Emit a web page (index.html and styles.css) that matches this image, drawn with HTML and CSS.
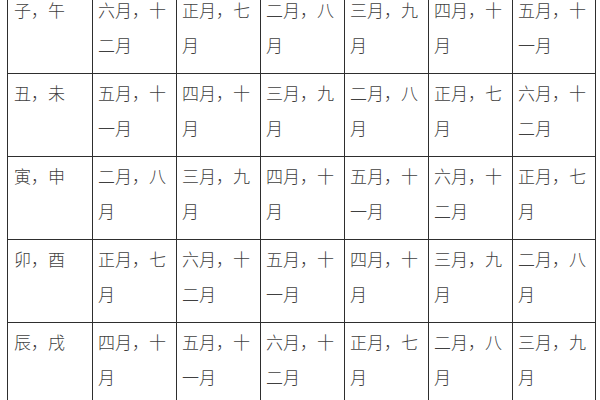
FILE: index.html
```html
<!DOCTYPE html>
<html lang="zh-CN">
<head>
<meta charset="utf-8">
<title>月份表</title>
<link rel="stylesheet" href="styles.css">
</head>
<body>
<table class="months">
  <colgroup>
    <col class="c-first">
    <col class="c"><col class="c"><col class="c"><col class="c"><col class="c"><col class="c-last">
  </colgroup>
  <tbody>
    <tr><td class="branch">子，午</td><td>六月，十二月</td><td>正月，七月</td><td>二月，八月</td><td>三月，九月</td><td>四月，十月</td><td>五月，十一月</td></tr>
    <tr><td class="branch">丑，未</td><td>五月，十一月</td><td>四月，十月</td><td>三月，九月</td><td>二月，八月</td><td>正月，七月</td><td>六月，十二月</td></tr>
    <tr><td class="branch">寅，申</td><td>二月，八月</td><td>三月，九月</td><td>四月，十月</td><td>五月，十一月</td><td>六月，十二月</td><td>正月，七月</td></tr>
    <tr><td class="branch">卯，酉</td><td>正月，七月</td><td>六月，十二月</td><td>五月，十一月</td><td>四月，十月</td><td>三月，九月</td><td>二月，八月</td></tr>
    <tr><td class="branch">辰，戌</td><td>四月，十月</td><td>五月，十一月</td><td>六月，十二月</td><td>正月，七月</td><td>二月，八月</td><td>三月，九月</td></tr>
  </tbody>
</table>
</body>
</html>
```
FILE: styles.css
```css
html, body {
  margin: 0;
  padding: 0;
  background: #ffffff;
  overflow: hidden;
}
body {
  width: 600px;
  height: 400px;
  font-family: "Noto Sans CJK SC", "Noto Sans", sans-serif;
  color: #404040;
}
.months {
  border-collapse: collapse;
  table-layout: fixed;
  width: 587px;
  margin: -10px 0 0 7px;
  font-size: 17px;
  font-weight: 300;
  line-height: 35px;
}
.c-first { width: 85px; }
.c { width: 84px; }
.c-last { width: 83px; }
.months td {
  border: 1px solid #2e2e2e;
  height: 83px;
  box-sizing: border-box;
  padding: 1px 4px 0 5px;
  vertical-align: top;
  word-break: break-all;
}
.months td.branch {
  padding-left: 6px;
}
```
